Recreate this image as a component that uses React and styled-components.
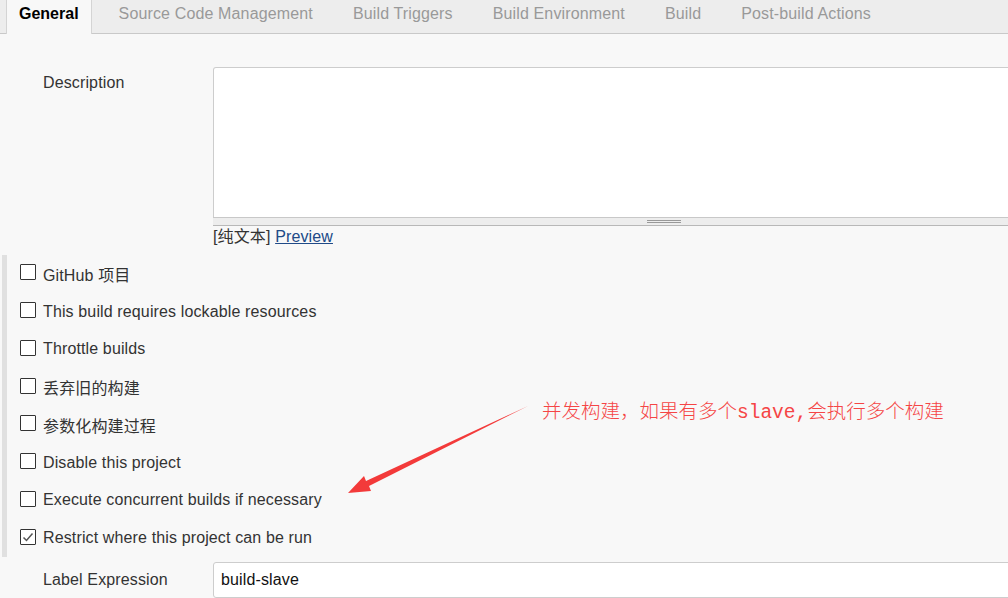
import React from "react";
import styled, { createGlobalStyle } from "styled-components";

const GlobalStyle = createGlobalStyle`
  html, body {
    margin: 0;
    padding: 0;
    background: #f8f8f8;
    overflow: hidden;
  }
  body {
    font-family: "Liberation Sans", Arial, "Noto Sans CJK SC", sans-serif;
    font-size: 16px;
    letter-spacing: 0.13px;
    color: #333;
  }
`;

const Page = styled.div`
  position: relative;
  width: 1008px;
  height: 598px;
  overflow: hidden;
`;

const TabBar = styled.div`
  display: flex;
  gap: 14px;
  height: 33px;
  padding-left: 6px;
  background: #ededed;
  border-bottom: 1px solid #c9c9c9;
`;

const Tab = styled.div`
  display: flex;
  align-items: center;
  height: ${(p) => (p.$active ? "34px" : "33px")};
  padding: 0 12px 6px;
  box-sizing: border-box;
  font-size: 16px;
  letter-spacing: ${(p) => (p.$active ? "0" : "0.14px")};
  font-weight: ${(p) => (p.$active ? 700 : 400)};
  color: ${(p) => (p.$active ? "#000" : "#999")};
  background: ${(p) => (p.$active ? "#f8f8f8" : "transparent")};
  border-left: 1px solid ${(p) => (p.$active ? "#d4d4d4" : "transparent")};
  border-right: 1px solid ${(p) => (p.$active ? "#d4d4d4" : "transparent")};
`;

const Form = styled.div`
  padding-top: 33px;
`;

const FieldRow = styled.div`
  display: grid;
  grid-template-columns: 170px 902px;
  padding-left: 43px;
  margin-top: ${(p) => p.$top || "0"};
`;

const FieldLabel = styled.div`
  line-height: 20px;
  padding-top: ${(p) => p.$pad || "6px"};
  color: #333;
`;

const Field = styled.div`
  display: flex;
  flex-direction: column;
`;

const TextArea = styled.textarea`
  display: block;
  width: 100%;
  height: 150px;
  box-sizing: border-box;
  border: 1px solid #cdcdcd;
  border-bottom: none;
  border-radius: 3px 3px 0 0;
  background: #fff;
  resize: none;
  outline: none;
`;

const ResizeBar = styled.div`
  display: flex;
  justify-content: center;
  align-items: center;
  height: 7px;
  background: #ededed;
  border-top: 1px solid #c8c8c8;
  border-bottom: 1px solid #b8b8b8;
`;

const Grip = styled.div`
  width: 34px;
  height: 1px;
  border-top: 1px solid #999;
  border-bottom: 1px solid #999;
`;

const Hint = styled.div`
  line-height: 20px;
  margin-top: 1px;
  color: #333;
`;

const PreviewLink = styled.a`
  color: #204a87;
  text-decoration: underline;
  cursor: pointer;
`;

const OptionSection = styled.div`
  margin: 8px 0 0 2px;
  padding-left: 13px;
  border-left: 5px solid #e0e0e0;
`;

const OptionRow = styled.label`
  display: flex;
  align-items: center;
  gap: 7px;
  height: 37.75px;
  color: #333;
`;

const Box = styled.span`
  display: flex;
  align-items: center;
  justify-content: center;
  width: 16px;
  height: 16px;
  box-sizing: border-box;
  border: 1.5px solid #333;
  border-radius: 1px;
  background: #fff;
  margin-top: -3px;
`;

const TextInput = styled.input`
  height: 36px;
  box-sizing: border-box;
  border: 1px solid #cdcdcd;
  border-radius: 3px;
  background: #fff;
  padding: 0 7px;
  font-family: "Liberation Sans", Arial, sans-serif;
  font-size: 16px;
  letter-spacing: 0.13px;
  color: #111;
  outline: none;
`;

const Note = styled.div`
  position: absolute;
  left: 542px;
  top: 397px;
  font-family: "Noto Sans CJK SC", sans-serif;
  font-size: 19.5px;
  font-weight: 300;
  letter-spacing: 0;
  line-height: 26px;
  color: #f54545;
  white-space: nowrap;
`;

const Mono = styled.span`
  font-family: "Liberation Mono", monospace;
  font-weight: 400;
`;

const ArrowSvg = styled.svg`
  position: absolute;
  left: 0;
  top: 0;
  pointer-events: none;
`;

const Checkbox = ({ checked }) => (
  <Box>
    {checked && (
      <svg width="12" height="12" viewBox="0 0 12 12">
        <polyline points="1.5,6.5 4.5,9.5 10.5,2.5" fill="none" stroke="#555" strokeWidth="1.5" />
      </svg>
    )}
  </Box>
);

const tabs = [
  "General",
  "Source Code Management",
  "Build Triggers",
  "Build Environment",
  "Build",
  "Post-build Actions",
];

const options = [
  { label: "GitHub 项目" },
  { label: "This build requires lockable resources" },
  { label: "Throttle builds" },
  { label: "丢弃旧的构建" },
  { label: "参数化构建过程" },
  { label: "Disable this project" },
  { label: "Execute concurrent builds if necessary" },
  { label: "Restrict where this project can be run", checked: true },
];

const App = () => (
  <Page>
    <GlobalStyle />
    <TabBar>
      {tabs.map((t, i) => (
        <Tab key={t} $active={i === 0}>
          {t}
        </Tab>
      ))}
    </TabBar>
    <Form>
      <FieldRow>
        <FieldLabel>Description</FieldLabel>
        <Field>
          <TextArea />
          <ResizeBar>
            <Grip />
          </ResizeBar>
          <Hint>
            [纯文本] <PreviewLink>Preview</PreviewLink>
          </Hint>
        </Field>
      </FieldRow>
      <OptionSection>
        {options.map((o) => (
          <OptionRow key={o.label}>
            <Checkbox checked={o.checked} />
            {o.label}
          </OptionRow>
        ))}
      </OptionSection>
      <FieldRow $top="5px">
        <FieldLabel $pad="8px">Label Expression</FieldLabel>
        <TextInput defaultValue="build-slave" />
      </FieldRow>
    </Form>
    <Note>
      并发构建，如果有多个<Mono>slave,</Mono>会执行多个构建
    </Note>
    <ArrowSvg width="1008" height="598" viewBox="0 0 1008 598">
      <polygon
        points="528,406 369,486 371,491 348,493 364,476 366,481"
        fill="#f33a3a"
      />
    </ArrowSvg>
  </Page>
);

export default App;
